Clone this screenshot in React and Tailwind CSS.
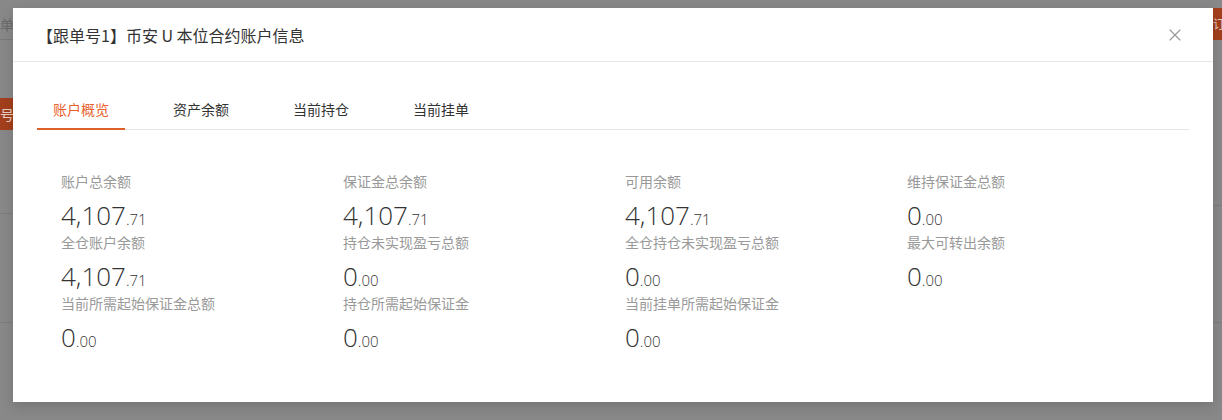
import React, { useState } from 'react';
import { X } from 'lucide-react';

const FONT = { fontFamily: '"Noto Sans CJK SC", "Noto Sans", sans-serif' };
const NUM_FONT = { fontFamily: '"Open Sans", "Noto Sans", sans-serif' };

const TABS = ['账户概览', '资产余额', '当前持仓', '当前挂单'];

const ITEMS = [
  ['账户总余额', '4,107', '.71'],
  ['保证金总余额', '4,107', '.71'],
  ['可用余额', '4,107', '.71'],
  ['维持保证金总额', '0', '.00'],
  ['全仓账户余额', '4,107', '.71'],
  ['持仓未实现盈亏总额', '0', '.00'],
  ['全仓持仓未实现盈亏总额', '0', '.00'],
  ['最大可转出余额', '0', '.00'],
  ['当前所需起始保证金总额', '0', '.00'],
  ['持仓所需起始保证金', '0', '.00'],
  ['当前挂单所需起始保证金', '0', '.00'],
];

function Stat({ label, int, dec }) {
  return (
    <div className="flex flex-col">
      <div className="text-[14px] leading-[20px] text-[#999]">{label}</div>
      <div className="h-[40px] flex items-end pb-[3px] text-[#333] font-light" style={NUM_FONT}>
        <span className="text-[26px] leading-none">{int}</span>
        <span className="text-[15px] leading-none mb-[1px]">{dec}</span>
      </div>
    </div>
  );
}

// page behind the overlay (only the edges are visible)
function Backdrop() {
  return (
    <div className="flex justify-between h-[420px] bg-[#888888]">
      <div className="w-[13px] flex flex-col">
        <div className="mt-[8px] h-[32px] border-b border-[#7a7a7a] text-[14px] leading-[32px] text-[#6a6a6a] overflow-hidden whitespace-nowrap">
          单
        </div>
        <div className="mt-[58px] h-[32px] bg-[#a33f1c] text-[14px] leading-[32px] text-[#e6d0c6] overflow-hidden whitespace-nowrap">
          号
        </div>
        <div className="mt-[83px] border-b border-[#7c7c7c]" />
        <div className="mt-[108px] border-b border-[#7c7c7c]" />
      </div>
      <div className="w-[9px] flex flex-col">
        <div className="mt-[8px] h-[32px] bg-[#a33f1c] text-[12px] leading-[32px] text-[#e6d0c6] overflow-hidden whitespace-nowrap">
          订
        </div>
        <div className="mt-[165px] border-b border-[#7c7c7c]" />
        <div className="mt-[116px] border-b border-[#7c7c7c]" />
      </div>
    </div>
  );
}

export default function App() {
  const [active, setActive] = useState(0);

  return (
    <div className="relative w-[1222px] h-[420px] overflow-hidden" style={FONT}>
      <Backdrop />

      {/* modal */}
      <div className="absolute left-[13px] top-[8px] w-[1200px] h-[394px] bg-white shadow-[0_4px_12px_rgba(0,0,0,0.15)] flex flex-col">
        <div className="h-[54px] flex items-center justify-between px-6 border-b border-[#e8e8e8]">
          <div className="text-[16px] text-[#333]">【跟单号1】币安 U 本位合约账户信息</div>
          <X size={20} strokeWidth={1.4} className="text-[#999] mr-[4px]" />
        </div>

        <div className="px-6 pt-[28px]">
          <div className="flex gap-8 border-b border-[#e8e8e8]">
            {TABS.map((t, i) => (
              <button
                key={t}
                onClick={() => setActive(i)}
                className={`px-4 h-[40px] text-[14px] leading-[20px] -mb-px border-b-2 ${
                  i === active ? 'text-[#e8622e] border-[#e0602c]' : 'text-[#333] border-transparent'
                }`}
              >
                {t}
              </button>
            ))}
          </div>

          <div className="grid grid-cols-4 pl-6 pt-[41px] gap-y-[1px]">
            {ITEMS.map(([label, int, dec]) => (
              <Stat key={label} label={label} int={int} dec={dec} />
            ))}
          </div>
        </div>
      </div>
    </div>
  );
}
